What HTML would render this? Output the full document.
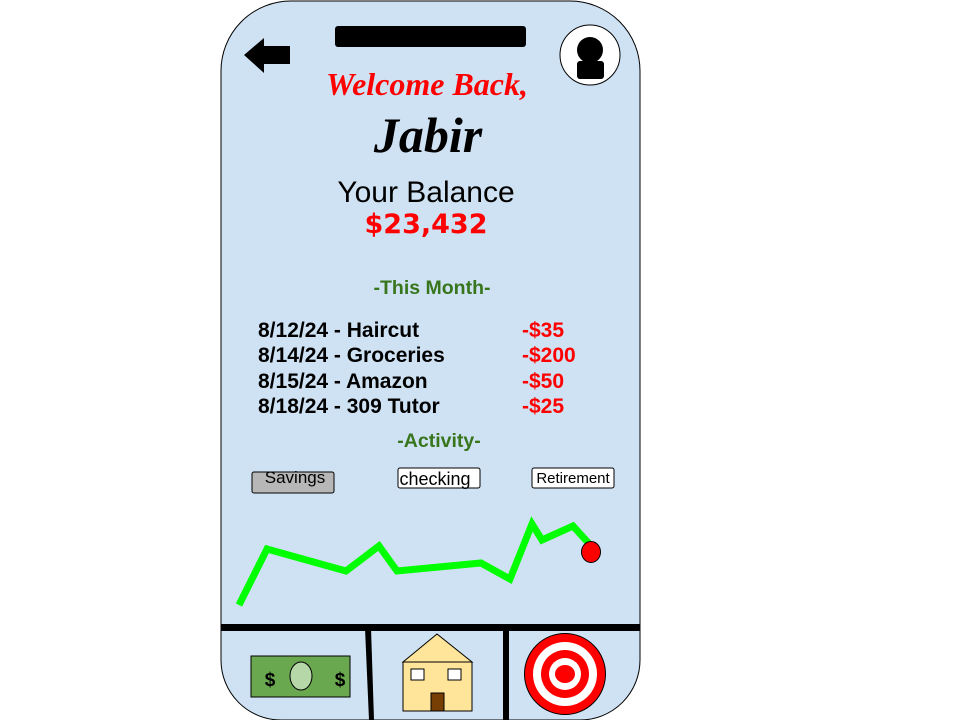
<!DOCTYPE html>
<html><head><meta charset="utf-8"><style>html,body{margin:0;padding:0;background:#fff;width:960px;height:720px;overflow:hidden}</style></head>
<body>
<svg width="960" height="720" viewBox="0 0 960 720" xmlns="http://www.w3.org/2000/svg" font-family="Liberation Sans, sans-serif">
<defs><clipPath id="ph"><path d="M291,1 H570 A70,70 0 0 1 640,71 V660 A60,60 0 0 1 580,720 H281 A60,60 0 0 1 221,660 V71 A70,70 0 0 1 291,1 Z"/></clipPath></defs>
<path d="M291,1 H570 A70,70 0 0 1 640,71 V660 A60,60 0 0 1 580,720 H281 A60,60 0 0 1 221,660 V71 A70,70 0 0 1 291,1 Z" fill="#cfe2f3" stroke="#000" stroke-width="1"/>
<rect x="335" y="26" width="191" height="21" rx="3" fill="#000"/>
<path d="M244,55 L264,38 V46 H290 V64 H264 V73 Z" fill="#000"/>
<circle cx="590" cy="55" r="30" fill="#fff" stroke="#000" stroke-width="1"/>
<circle cx="590" cy="50" r="13" fill="#000"/>
<rect x="577" y="61" width="27" height="18" rx="3" fill="#000"/>
<text x="427" y="95" text-anchor="middle" font-family="Liberation Serif, serif" font-style="italic" font-weight="bold" font-size="32" fill="#f00">Welcome Back,</text>
<text x="428" y="152" text-anchor="middle" font-family="Liberation Serif, serif" font-style="italic" font-weight="bold" font-size="50" fill="#000">Jabir</text>
<text x="426" y="202" text-anchor="middle" font-size="30" fill="#000">Your Balance</text>
<text x="426" y="233" text-anchor="middle" font-family="DejaVu Sans, sans-serif" font-weight="bold" font-size="27" fill="#f00">$23,432</text>
<text x="432" y="294" text-anchor="middle" font-weight="bold" font-size="19.5" fill="#38761d">-This Month-</text>
<g font-weight="bold" font-size="21">
<text x="258" y="337">8/12/24 - Haircut</text>
<text x="258" y="362">8/14/24 - Groceries</text>
<text x="258" y="388">8/15/24 - Amazon</text>
<text x="258" y="413">8/18/24 - 309 Tutor</text>
<g fill="#f00"><text x="522" y="337">-$35</text><text x="522" y="362">-$200</text><text x="522" y="388">-$50</text><text x="522" y="413">-$25</text></g>
</g>
<text x="439" y="447" text-anchor="middle" font-weight="bold" font-size="19.5" fill="#38761d">-Activity-</text>
<rect x="252" y="472" width="82" height="21" rx="2" fill="#b7b7b7" stroke="#000"/>
<text x="295" y="483" text-anchor="middle" font-size="17">Savings</text>
<rect x="398" y="468" width="82" height="20" rx="2" fill="#fff" stroke="#000"/>
<text x="435" y="485" text-anchor="middle" font-size="18">checking</text>
<rect x="532" y="468" width="82" height="20" rx="2" fill="#fff" stroke="#000"/>
<text x="573" y="483" text-anchor="middle" font-size="15">Retirement</text>
<polyline points="239,605 267,549 346,571 379,546 397,571 481,563 510,579 532,524 542,540 573,526 593,548" fill="none" stroke="#00ff00" stroke-width="7"/>
<ellipse cx="591" cy="552" rx="9.5" ry="10.5" fill="#f00" stroke="#000" stroke-width="1"/>
<g clip-path="url(#ph)">
<rect x="215" y="624" width="430" height="7" fill="#000"/>
<path d="M365,628 L369,720 L374,720 L371,628 Z" fill="#000"/>
<rect x="503" y="628" width="6" height="95" fill="#000"/>
</g>
<rect x="251" y="656" width="99" height="41" fill="#6aa84f" stroke="#000"/>
<ellipse cx="301" cy="676" rx="11" ry="14" fill="#b6d7a8" stroke="#000"/>
<text x="270" y="686" text-anchor="middle" font-weight="bold" font-size="19">$</text>
<text x="340" y="686" text-anchor="middle" font-weight="bold" font-size="19">$</text>
<path d="M403,662 L437,634 L472,662 Z" fill="#ffe599" stroke="#000"/>
<rect x="403" y="662" width="69" height="49" fill="#ffe599" stroke="#000"/>
<rect x="411" y="669" width="13" height="11" fill="#fff" stroke="#000"/>
<rect x="448" y="669" width="13" height="11" fill="#fff" stroke="#000"/>
<rect x="431" y="693" width="13" height="18" fill="#783f04" stroke="#000"/>
<circle cx="565" cy="674" r="40.5" fill="#f00" stroke="#000"/>
<circle cx="565" cy="674" r="32" fill="#fff"/>
<circle cx="565" cy="674" r="24" fill="#f00"/>
<circle cx="565" cy="674" r="16" fill="#fff"/>
<ellipse cx="565" cy="674" rx="10" ry="9" fill="#f00"/>
</svg>
</body></html>
